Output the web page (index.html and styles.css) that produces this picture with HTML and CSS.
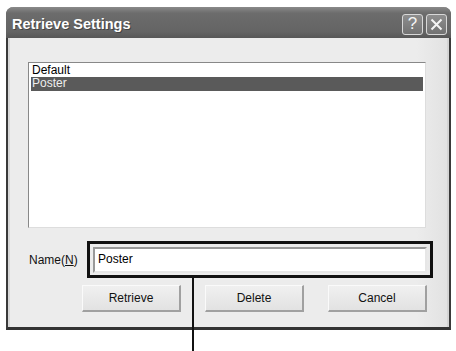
FILE: index.html
```html
<!DOCTYPE html>
<html>
<head>
<meta charset="utf-8">
<link rel="stylesheet" href="styles.css">
</head>
<body>
<div class="window">
  <div class="titlebar">
    <span class="title">Retrieve Settings</span>
    <div class="tbtns">
      <span class="tbtn">?</span>
      <span class="tbtn"><svg width="15" height="15" viewBox="0 0 15 15"><path d="M2.5 2.5 L12.5 12.5 M12.5 2.5 L2.5 12.5" stroke="#f4f4f4" stroke-width="2" fill="none"/></svg></span>
    </div>
  </div>
  <div class="content">
    <div class="listbox">
      <div class="item">Default</div>
      <div class="item sel">Poster</div>
    </div>
    <div class="namerow">
      <span class="label">Name(<u>N</u>)</span>
      <div class="callout">
        <div class="input">Poster</div>
      </div>
    </div>
    <div class="buttons">
      <div class="btn">Retrieve</div>
      <div class="btn">Delete</div>
      <div class="btn">Cancel</div>
    </div>
  </div>
</div>
<div class="leader"></div>
</body>
</html>
```
FILE: styles.css
```css
html, body {
  margin: 0;
  padding: 0;
  background: #fff;
  width: 456px;
  height: 351px;
  overflow: hidden;
  font-family: "Liberation Sans", Arial, sans-serif;
}
.window {
  margin: 7px 0 0 6px;
  width: 445px;
  height: 323px;
  box-sizing: border-box;
  background: #ececec;
  border: 2px solid #3a3a3a;
  border-top: none;
  border-bottom: 3px solid #333;
  border-radius: 8px 8px 0 0;
  display: flex;
  flex-direction: column;
  position: relative;
}
.titlebar {
  height: 31px;
  flex: none;
  background: linear-gradient(#8a8a8a 0%, #6c6c6c 20%, #646464 80%, #575757 100%);
  border-radius: 7px 7px 0 0;
  margin: 0 -2px;
  display: flex;
  align-items: center;
  padding: 0 4px 0 6px;
}
.title {
  color: #fff;
  font-weight: bold;
  font-size: 14.5px;
  text-shadow: 1px 1px 0 #444;
  flex: 1;
  margin-top: 2px;
}
.tbtns {
  display: flex;
  gap: 3px;
  margin-top: 3px;
}
.tbtn {
  width: 21px;
  height: 21px;
  box-sizing: border-box;
  border: 1px solid #d8d8d8;
  border-radius: 3px;
  background: linear-gradient(#8e8e8e, #727272);
  color: #f4f4f4;
  font-size: 17px;
  display: flex;
  align-items: center;
  justify-content: center;
}
.content {
  flex: 1;
  border-left: 2px solid #d8d8d8;
  border-right: 2px solid #d4d4d4;
  background: linear-gradient(90deg, #ececec 0%, #ececec 93%, #e2e2e2 100%);
  padding: 24px 0 0 18px;
}
.listbox {
  width: 398px;
  height: 166px;
  box-sizing: border-box;
  background: #fff;
  border: 1px solid #888;
  border-right-color: #ddd;
  border-bottom-color: #ddd;
  padding: 1px 2px;
  font-size: 12px;
}
.item {
  height: 13px;
  line-height: 13px;
  padding-left: 1px;
  color: #000;
}
.item.sel {
  background: #5a5a5a;
  color: #eee;
  height: 14px;
}
.namerow {
  display: flex;
  align-items: center;
  margin-top: 13px;
}
.label {
  font-size: 12px;
  width: 58px;
  padding-left: 1px;
  color: #111;
}
.callout {
  border: 3px solid #111;
  padding: 3px 3px 2px 3px;
  width: 346px;
  box-sizing: border-box;
}
.input {
  height: 26px;
  box-sizing: border-box;
  background: #fff;
  border: 2px solid #999;
  border-right-color: #e6e6e6;
  border-bottom-color: #e6e6e6;
  font-size: 12px;
  line-height: 18px;
  padding: 1px 3px;
  color: #000;
}
.buttons {
  display: flex;
  gap: 24px;
  margin: 7px 0 0 54px;
}
.btn {
  width: 99px;
  height: 27px;
  box-sizing: border-box;
  border: 1px solid #fafafa;
  border-right: 2px solid #a0a0a0;
  border-bottom: 2px solid #a0a0a0;
  background: linear-gradient(#f0f0f0, #e2e2e2);
  font-size: 12px;
  color: #111;
  display: flex;
  align-items: center;
  justify-content: center;
}
.leader {
  position: absolute;
  left: 192px;
  top: 278px;
  width: 2px;
  height: 73px;
  background: #111;
}
```
